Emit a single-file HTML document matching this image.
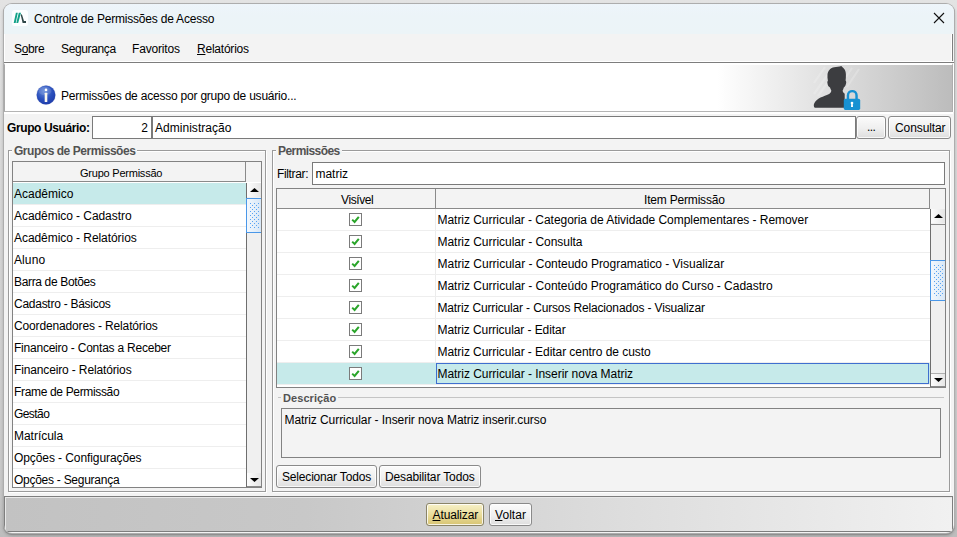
<!DOCTYPE html>
<html lang="pt-BR">
<head>
<meta charset="utf-8">
<title>Controle de Permissões de Acesso</title>
<style>
html,body{margin:0;padding:0;}
body{width:957px;height:537px;overflow:hidden;background:linear-gradient(180deg,#e3e3e3 0,#d9d9d9 30%,#d2d2d2 55%,#c8c8c8 90%,#bdbdbd 100%);position:relative;
 font-family:"Liberation Sans",sans-serif;font-size:12px;color:#000;}
.abs{position:absolute;}
.t{position:absolute;white-space:nowrap;line-height:14px;}
.b{font-weight:bold;}
#win{position:absolute;left:4px;top:4px;width:950px;height:529px;border-radius:8px;background:#f3f3f3;
 box-shadow:0 0 0 1px #adadad,0 1px 0 1px #8f8f8f,0 2px 3px 1px rgba(0,0,0,.18);overflow:hidden;}
#titlebar{position:absolute;left:0;top:0;width:950px;height:31px;background:linear-gradient(#eef5fb,#ecf4f8 40%,#ecf4f7);}
#menubar{position:absolute;left:0;top:31px;width:947px;height:28px;background:#f3f3f3;border-right:1px solid #7f7f7f;border-left:1px solid #fff;box-shadow:inset -1px 0 0 #fff;}
#sepline{position:absolute;left:0;top:59px;width:950px;height:1px;background:#7d7d7d;box-shadow:0 -1px 0 #fff;}
#header{position:absolute;left:0;top:60px;width:947px;height:46px;border-left:1px solid #a9a9a9;border-right:1px solid #adadad;
 border-top:2px solid #fff;box-shadow:1px 0 0 #fff,0 2px 0 #fff;
 background:linear-gradient(90deg,#fff 0,#fff 712px,#bcbcbc 947px);
 border-bottom:1px solid #b4b4b4;}
.inp{position:absolute;background:#fff;border:1px solid #7a7a7a;box-sizing:border-box;}
.btn{position:absolute;box-sizing:border-box;border:1px solid #8a8a8a;border-radius:3px;
 background:linear-gradient(#fbfbfb,#efefef 55%,#dedede);box-shadow:inset 0 0 0 1px rgba(255,255,255,.8);}
.gb{position:absolute;box-sizing:border-box;border:1px solid #9b9b9b;box-shadow:inset 1px 1px 0 #fff,1px 1px 0 #fff;}
.gbt{position:absolute;background:#f3f3f3;font-weight:bold;color:#525252;white-space:nowrap;line-height:14px;padding:0 2px;}
.tbl{position:absolute;box-sizing:border-box;border:1px solid #828282;background:#fff;overflow:hidden;}
.th{position:absolute;box-sizing:border-box;background:#f3f3f3;border-right:1px solid #8a8a8a;border-bottom:1px solid #8a8a8a;
 text-align:center;}
.row{position:absolute;left:0;height:21px;border-bottom:1px solid #eeeeee;}
.row .t{top:4px;}
.sel{background:#c6eaea;}
.sb{position:absolute;background:#f0f0f0;border-left:1px solid #6e6e6e;box-sizing:border-box;}
.sbtn{position:absolute;left:0;width:15px;height:14px;background:linear-gradient(90deg,#fdfdfd,#e4e4e4);}
.thumb{position:absolute;left:-1px;width:16px;box-sizing:border-box;border:1px solid #4a97e8;border-right:none;background:linear-gradient(90deg,#f3f8fd,#d6e6f6);overflow:hidden;}
.cb{position:absolute;left:72px;top:4px;width:13px;height:13px;box-sizing:border-box;border:1px solid #7b7b7b;background:#fff;}
#bottombar{position:absolute;left:0;top:493px;width:949px;height:36px;box-sizing:border-box;border:1px solid #7e7e7e;
 background:linear-gradient(90deg,#c2c2c2 0,#c8c8c8 300px,#dcdcdc 600px,#f1f1f1 948px);box-shadow:inset 1px 1px 0 #e8e8e8;}
.btn.def{background:linear-gradient(#f7f1c8,#eadd9c 50%,#d7c472);border-color:#8a8468;}
/*LS*/
#title{letter-spacing:-0.205px}
#m1{letter-spacing:-0.369px}
#m2{letter-spacing:-0.361px}
#m3{letter-spacing:-0.184px}
#m4{letter-spacing:-0.223px}
#htext{letter-spacing:-0.214px}
#lgu{letter-spacing:-0.387px}
#i2{letter-spacing:0.028px}
#b1{letter-spacing:-0.572px}
#b2{letter-spacing:-0.095px}
#g1{letter-spacing:-0.466px}
#lh{letter-spacing:-0.226px}
#l0{letter-spacing:0.003px}
#l1{letter-spacing:-0.061px}
#l2{letter-spacing:-0.062px}
#l3{letter-spacing:0.099px}
#l4{letter-spacing:-0.348px}
#l5{letter-spacing:-0.265px}
#l6{letter-spacing:-0.147px}
#l7{letter-spacing:-0.228px}
#l8{letter-spacing:-0.140px}
#l9{letter-spacing:-0.338px}
#l10{letter-spacing:-0.567px}
#l11{letter-spacing:-0.029px}
#l12{letter-spacing:-0.087px}
#l13{letter-spacing:-0.265px}
#g2{letter-spacing:-0.569px}
#fl{letter-spacing:-0.350px}
#fi{letter-spacing:-0.029px}
#rh1{letter-spacing:-0.392px}
#rh2{letter-spacing:-0.190px}
#r0{letter-spacing:-0.042px}
#r1{letter-spacing:-0.037px}
#r2{letter-spacing:-0.022px}
#r3{letter-spacing:-0.028px}
#r4{letter-spacing:-0.152px}
#r5{letter-spacing:-0.074px}
#r6{letter-spacing:-0.055px}
#r7{letter-spacing:-0.048px}
#g3{letter-spacing:0.078px}
#dt{letter-spacing:-0.068px}
#b3{letter-spacing:-0.178px}
#b4{letter-spacing:-0.131px}
#b5{letter-spacing:-0.111px}
#b6{letter-spacing:0.052px}
/*END*/
</style>
</head>
<body>
<div id="win"><div class="abs" style="left:0;top:-1px;width:950px;height:530px;">
 <div id="titlebar">
  <svg class="abs" style="left:8px;top:7px" width="16" height="16" viewBox="0 0 16 16">
   <rect x="0" y="0" width="16" height="16" rx="2.500" fill="#fdfeff"/>
   <path d="M1.700 12.900 L3.700 12.900 L5.800 2.800 L3.900 2.800 Z" fill="#13a188"/>
   <path d="M4.300 12.900 L6.200 12.900 L9 2.800 L6.800 2.800 Z" fill="#13a188"/>
   <path d="M8.700 4.700 L9.900 4.200 L12 11.100 L14 11.100 L14 12.900 L10.600 12.900 Z" fill="#2f4647"/>
  </svg>
  <div class="t" id="title" style="left:30px;top:9px;">Controle de Permissões de Acesso</div>
  <svg class="abs" style="left:929px;top:9px" width="12" height="12" viewBox="0 0 12 12">
   <path d="M1 1 L11 11 M11 1 L1 11" stroke="#111" stroke-width="1.1" fill="none"/>
  </svg>
 </div>
 <div id="menubar">
  <div class="t" id="m1" style="left:9px;top:8px;">S<u>o</u>bre</div>
  <div class="t" id="m2" style="left:56px;top:8px;">Segurança</div>
  <div class="t" id="m3" style="left:127px;top:8px;">Favoritos</div>
  <div class="t" id="m4" style="left:192px;top:8px;"><u>R</u>elatórios</div>
 </div>
 <div id="sepline"></div>
 <div id="header">
  <svg class="abs" style="left:31px;top:19.800px" width="20" height="20" viewBox="0 0 20 20">
   <defs>
    <pattern id="dots" width="4" height="4" patternUnits="userSpaceOnUse"><rect x="0" y="0" width="1" height="1" fill="#58a3f2"/><rect x="2" y="2" width="1" height="1" fill="#58a3f2"/></pattern>
    <radialGradient id="ig" cx="0.4" cy="0.3" r="0.8">
     <stop offset="0" stop-color="#6288d8"/><stop offset="0.55" stop-color="#2a4fbc"/><stop offset="1" stop-color="#1c38a6"/>
    </radialGradient>
   </defs>
   <circle cx="10" cy="10" r="9.900" fill="#8a93b8" opacity=".3"/><circle cx="10" cy="10" r="9.400" fill="url(#ig)"/>
   <ellipse cx="9" cy="6" rx="6.500" ry="4.200" fill="#fff" opacity=".12"/>
   <circle cx="10" cy="4.900" r="1.350" fill="#fff"/>
   <rect x="8.700" y="7.800" width="2.600" height="9.200" rx="0.500" fill="#fbf8ee"/>
  </svg>
  <div class="t" id="htext" style="left:56px;top:24px;">Permissões de acesso por grupo de usuário...</div>
  <svg class="abs" style="left:801px;top:-3px" width="64" height="52" viewBox="0 0 64 52">
   <g stroke="#fff" stroke-width="2.200" opacity=".2" fill="none">
    <path d="M19 5 L8 21"/><path d="M27 5 L8 32"/><path d="M46 6 L40 15"/><path d="M53 7 L41 25"/><path d="M22 20 L12 34"/>
   </g>
   <path d="M8.700 45.700 C7.600 44.500 7.600 42.800 8.200 41.500 C9.200 39.500 11.500 37.200 14.500 35.600 C17.500 34.200 20.500 33.600 22.600 32.300 C24.500 31.200 25.300 30.200 25.300 28.600 C24.800 27.500 24.300 26.600 24 25.600 C22.600 25 21.700 23.300 21.500 21.600 C21.200 20.300 21.300 19.300 21.900 18.700 C21.500 16.500 21.300 14.500 21.500 12.400 C21.800 8.800 24.500 5.800 28.200 5.200 C30.500 4.900 33.200 5 35.300 4 C35.900 4.700 36.600 5.300 37.600 6.200 C39.200 7.800 39.900 10 39.900 12.600 C40 14.800 39.800 16.800 39.600 18.600 C40.300 19.400 40.400 20.500 40 21.800 C39.700 23.300 39 24.800 37.800 25.600 C37.500 26.700 37 27.800 36.600 28.800 C36.800 30 37.600 31 38.700 31.800 L38.700 45.700 Z" fill="#3c3d40"/>
   <path d="M41.950 37.500 L41.950 33.600 C41.950 27.600 50.550 27.600 50.550 33.600 L50.550 37.500" fill="none" stroke="#1791d2" stroke-width="2.450"/>
   <rect x="37.800" y="36.800" width="16.400" height="11.100" rx="1.600" fill="#1791d2"/>
   <circle cx="46" cy="41" r="1.350" fill="#fff"/>
   <path d="M45.300 41 L46.700 41 L47 45 L45 45 Z" fill="#fff"/>
  </svg>
 </div>
 <div class="t b" id="lgu" style="left:3px;top:118px;">Grupo Usuário:</div>
 <div class="inp" style="left:88px;top:113px;width:60px;height:23px;"><div class="t" id="i1" style="right:3px;top:4px;">2</div></div>
 <div class="inp" style="left:148px;top:113px;width:704px;height:23px;"><div class="t" id="i2" style="left:2px;top:4px;">Administração</div></div>
 <div class="btn" style="left:852px;top:113px;width:30px;height:23px;"><div class="t" id="b1" style="left:10px;top:3px;">...</div></div>
 <div class="btn" style="left:884px;top:113px;width:63px;height:23px;"><div class="t" id="b2" style="left:6px;top:4px;">Consultar</div></div>

 <div class="gb" style="left:4px;top:147px;width:258px;height:342px;"></div>
 <div class="gbt" id="g1" style="left:8px;top:141px;">Grupos de Permissões</div>
 <div class="tbl" id="ltbl" style="left:8px;top:158px;width:250px;height:327px;">
  <div class="th" style="left:0;top:0;width:233px;height:20px;"><span class="t" id="lh" style="left:67px;top:4px;font-size:11px;">Grupo Permissão</span></div>
  <div class="th" style="left:233px;top:0;width:15px;height:20px;border-right:none;border-bottom:none;"></div>
  <div class="row sel" style="top:21px;width:233px;"><div class="t" id="l0" style="left:1px;">Acadêmico</div></div>
  <div class="row" style="top:43px;width:233px;"><div class="t" id="l1" style="left:1px;">Acadêmico - Cadastro</div></div>
  <div class="row" style="top:65px;width:233px;"><div class="t" id="l2" style="left:1px;">Acadêmico - Relatórios</div></div>
  <div class="row" style="top:87px;width:233px;"><div class="t" id="l3" style="left:1px;">Aluno</div></div>
  <div class="row" style="top:109px;width:233px;"><div class="t" id="l4" style="left:1px;">Barra de Botões</div></div>
  <div class="row" style="top:131px;width:233px;"><div class="t" id="l5" style="left:1px;">Cadastro - Básicos</div></div>
  <div class="row" style="top:153px;width:233px;"><div class="t" id="l6" style="left:1px;">Coordenadores - Relatórios</div></div>
  <div class="row" style="top:175px;width:233px;"><div class="t" id="l7" style="left:1px;">Financeiro - Contas a Receber</div></div>
  <div class="row" style="top:197px;width:233px;"><div class="t" id="l8" style="left:1px;">Financeiro - Relatórios</div></div>
  <div class="row" style="top:219px;width:233px;"><div class="t" id="l9" style="left:1px;">Frame de Permissão</div></div>
  <div class="row" style="top:241px;width:233px;"><div class="t" id="l10" style="left:1px;">Gestão</div></div>
  <div class="row" style="top:263px;width:233px;"><div class="t" id="l11" style="left:1px;">Matrícula</div></div>
  <div class="row" style="top:285px;width:233px;"><div class="t" id="l12" style="left:1px;">Opções - Configurações</div></div>
  <div class="row" style="top:307px;width:233px;"><div class="t" id="l13" style="left:1px;">Opções - Segurança</div></div>
  <div class="sb" style="left:233px;top:21px;width:16px;height:304px;">
   <div class="sbtn" style="top:0;"><svg class="abs" style="left:3px;top:5px" width="9" height="4" viewBox="0 0 9 4"><path d="M0 4 L4.500 0 L9 4 Z" fill="#000"/></svg></div>
   <div class="thumb" style="top:15px;height:35px;"><svg class="abs" style="left:3px;top:4px" width="10" height="26"><rect width="10" height="26" fill="url(#dots)"/></svg></div>
   <div class="sbtn" style="top:290px;box-shadow:inset -1px -1px 0 #8a8a8a;"><svg class="abs" style="left:3px;top:5px" width="9" height="4" viewBox="0 0 9 4"><path d="M0 0 L4.500 4 L9 0 Z" fill="#000"/></svg></div>
  </div>
 </div>

 <div class="gb" style="left:268px;top:147px;width:678px;height:342px;"></div>
 <div class="gbt" id="g2" style="left:272px;top:141px;">Permissões</div>
 <div class="t" id="fl" style="left:273px;top:164px;">Filtrar:</div>
 <div class="inp" style="left:308px;top:159px;width:633px;height:23px;"><div class="t" id="fi" style="left:2.5px;top:4px;">matriz</div></div>
 <div class="tbl" id="rtbl" style="left:272px;top:185px;width:670px;height:200px;">
  <div class="th" style="left:0;top:0;width:159px;height:20px;"><span class="t" id="rh1" style="left:64px;top:4px;">Visível</span></div>
  <div class="th" style="left:159px;top:0;width:494px;height:20px;"><span class="t" id="rh2" style="left:208px;top:4px;">Item Permissão</span></div>
  <div class="th" style="left:653px;top:0;width:15px;height:20px;border-right:none;border-bottom:none;"></div>
  <div class="row" style="top:20px;width:653px;"><div class="abs" style="left:158px;top:0;width:1px;height:21px;background:#ececec;"></div><div class="cb"><svg class="abs" style="left:1px;top:1px" width="9" height="9" viewBox="0 0 9 9"><path d="M1.2 4.6 L3.6 7 L7.8 1.8" stroke="#2aa52a" stroke-width="2" fill="none"/></svg></div><div class="t" id="r0" style="left:160.5px;">Matriz Curricular - Categoria de Atividade Complementares - Remover</div></div>
  <div class="row" style="top:42px;width:653px;"><div class="abs" style="left:158px;top:0;width:1px;height:21px;background:#ececec;"></div><div class="cb"><svg class="abs" style="left:1px;top:1px" width="9" height="9" viewBox="0 0 9 9"><path d="M1.2 4.6 L3.6 7 L7.8 1.8" stroke="#2aa52a" stroke-width="2" fill="none"/></svg></div><div class="t" id="r1" style="left:160.5px;">Matriz Curricular - Consulta</div></div>
  <div class="row" style="top:64px;width:653px;"><div class="abs" style="left:158px;top:0;width:1px;height:21px;background:#ececec;"></div><div class="cb"><svg class="abs" style="left:1px;top:1px" width="9" height="9" viewBox="0 0 9 9"><path d="M1.2 4.6 L3.6 7 L7.8 1.8" stroke="#2aa52a" stroke-width="2" fill="none"/></svg></div><div class="t" id="r2" style="left:160.5px;">Matriz Curricular - Conteudo Programatico - Visualizar</div></div>
  <div class="row" style="top:86px;width:653px;"><div class="abs" style="left:158px;top:0;width:1px;height:21px;background:#ececec;"></div><div class="cb"><svg class="abs" style="left:1px;top:1px" width="9" height="9" viewBox="0 0 9 9"><path d="M1.2 4.6 L3.6 7 L7.8 1.8" stroke="#2aa52a" stroke-width="2" fill="none"/></svg></div><div class="t" id="r3" style="left:160.5px;">Matriz Curricular - Conteúdo Programático do Curso - Cadastro</div></div>
  <div class="row" style="top:108px;width:653px;"><div class="abs" style="left:158px;top:0;width:1px;height:21px;background:#ececec;"></div><div class="cb"><svg class="abs" style="left:1px;top:1px" width="9" height="9" viewBox="0 0 9 9"><path d="M1.2 4.6 L3.6 7 L7.8 1.8" stroke="#2aa52a" stroke-width="2" fill="none"/></svg></div><div class="t" id="r4" style="left:160.5px;">Matriz Curricular - Cursos Relacionados - Visualizar</div></div>
  <div class="row" style="top:130px;width:653px;"><div class="abs" style="left:158px;top:0;width:1px;height:21px;background:#ececec;"></div><div class="cb"><svg class="abs" style="left:1px;top:1px" width="9" height="9" viewBox="0 0 9 9"><path d="M1.2 4.6 L3.6 7 L7.8 1.8" stroke="#2aa52a" stroke-width="2" fill="none"/></svg></div><div class="t" id="r5" style="left:160.5px;">Matriz Curricular - Editar</div></div>
  <div class="row" style="top:152px;width:653px;"><div class="abs" style="left:158px;top:0;width:1px;height:21px;background:#ececec;"></div><div class="cb"><svg class="abs" style="left:1px;top:1px" width="9" height="9" viewBox="0 0 9 9"><path d="M1.2 4.6 L3.6 7 L7.8 1.8" stroke="#2aa52a" stroke-width="2" fill="none"/></svg></div><div class="t" id="r6" style="left:160.5px;">Matriz Curricular - Editar centro de custo</div></div>
  <div class="row sel" style="top:174px;width:653px;"><div class="abs" style="left:159px;top:0;width:493px;height:21px;box-sizing:border-box;border:1px solid #3f6fd0;"></div><div class="cb"><svg class="abs" style="left:1px;top:1px" width="9" height="9" viewBox="0 0 9 9"><path d="M1.2 4.6 L3.6 7 L7.8 1.8" stroke="#2aa52a" stroke-width="2" fill="none"/></svg></div><div class="t" id="r7" style="left:160.5px;">Matriz Curricular - Inserir nova Matriz</div></div>
  <div class="sb" style="left:653px;top:20px;width:16px;height:178px;">
   <div class="sbtn" style="top:0;"><svg class="abs" style="left:3px;top:5px" width="9" height="4" viewBox="0 0 9 4"><path d="M0 4 L4.500 0 L9 4 Z" fill="#000"/></svg></div>
   <div class="abs" style="left:0;top:15px;width:15px;height:1px;background:#8a8a8a;"></div>
   <div class="thumb" style="top:51px;height:41px;"><svg class="abs" style="left:3px;top:4px" width="10" height="32"><rect width="10" height="32" fill="url(#dots)"/></svg></div>
   <div class="sbtn" style="top:164px;box-shadow:inset -1px -1px 0 #8a8a8a,inset 0 1px 0 #b0b0b0;"><svg class="abs" style="left:3px;top:5px" width="9" height="4" viewBox="0 0 9 4"><path d="M0 0 L4.500 4 L9 0 Z" fill="#000"/></svg></div>
  </div>
 </div>

 <div class="abs" style="left:274px;top:394px;width:666px;height:1px;background:#c4c4c4;"></div>
 <div class="gbt" id="g3" style="left:277px;top:388px;font-size:11px;">Descrição</div>
 <div class="abs" style="left:277px;top:405px;width:660px;height:50px;box-sizing:border-box;border:1px solid #828282;background:#f3f3f3;"><div class="t" id="dt" style="left:2.5px;top:4px;">Matriz Curricular - Inserir nova Matriz inserir.curso</div></div>
 <div class="btn" style="left:272px;top:462px;width:101px;height:23px;"><div class="t" id="b3" style="left:5px;top:4px;">Selecionar Todos</div></div>
 <div class="btn" style="left:375px;top:462px;width:102px;height:23px;"><div class="t" id="b4" style="left:5px;top:4px;">Desabilitar Todos</div></div>

 <div id="bottombar">
  <div class="btn def" style="left:421px;top:6px;width:58px;height:23px;"><div class="t" id="b5" style="left:5.5px;top:4px;"><u>A</u>tualizar</div></div>
  <div class="btn" style="left:484px;top:6px;width:43px;height:23px;"><div class="t" id="b6" style="left:5px;top:4px;"><u>V</u>oltar</div></div>
 </div>
</div></div>
</body>
</html>
